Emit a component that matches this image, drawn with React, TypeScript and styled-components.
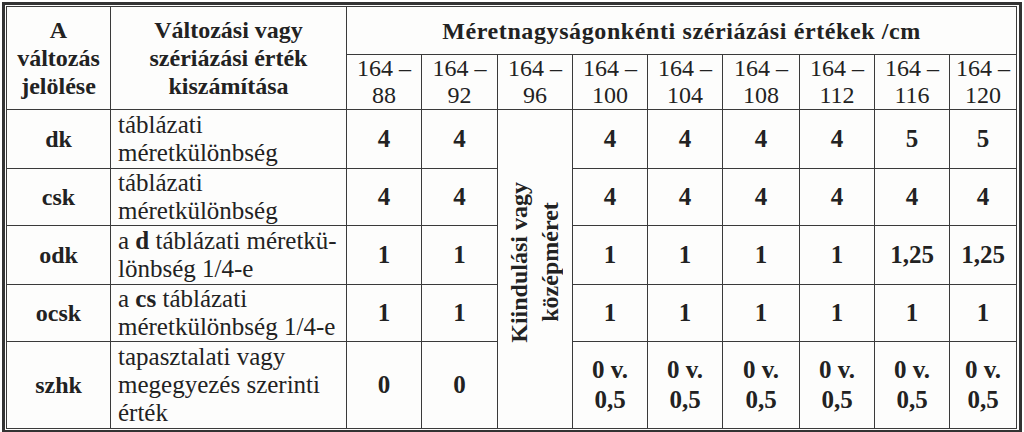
import styled, { createGlobalStyle } from "styled-components";

const Global = createGlobalStyle`
  html, body {
    margin: 0;
    background: #fff;
    font-family: "Liberation Serif", "Times New Roman", Times, serif;
  }
  table, td, b {
    font-family: "Liberation Serif", "Times New Roman", Times, serif;
  }
`;

const Frame = styled.div`
  margin: 2px 0 0 2px;
  width: 1012px;
  border: 3px solid #333;
  padding: 1px;
  background: #fdfdfc;
`;

const Table = styled.table`
  width: 1010px;
  table-layout: fixed;
  border-collapse: collapse;
  color: #222;
  font-size: 24px;
  line-height: 28px;
`;

const Cell = styled.td<{ $h?: number; $bold?: boolean; $left?: boolean }>`
  border: 1px solid #3a3a3a;
  padding: 0;
  height: ${(p) => (p.$h ? `${p.$h - 1}px` : "auto")};
  text-align: ${(p) => (p.$left ? "left" : "center")};
  padding-left: ${(p) => (p.$left ? "7px" : "0")};
  font-size: ${(p) => (p.$left ? "25px" : "inherit")};
  font-weight: ${(p) => (p.$bold ? 700 : 400)};
  vertical-align: middle;
  overflow: hidden;
  white-space: nowrap;
`;

const HeadCell = styled(Cell)`
  font-weight: 700;
`;

const TitleCell = styled(HeadCell)`
  letter-spacing: 0.6px;
`;

const RangeCell = styled(Cell)`
  line-height: 27px;
`;

const NumCell = styled(Cell)`
  font-size: 25px;
  line-height: 30px;
`;

const SpanCell = styled(Cell)`
  padding-bottom: 14px;
`;

const Rotated = styled.div`
  writing-mode: vertical-rl;
  transform: rotate(180deg);
  margin: 0 auto;
  font-weight: 700;
  line-height: 31px;
  text-align: center;
`;

const widths = [104, 236, 75, 76, 75, 75, 75, 77, 75, 75, 67];
const ranges = ["88", "92", "96", "100", "104", "108", "112", "116", "120"];

type Row = {
  code: string;
  desc: React.ReactNode;
  h: number;
  first: string[];
  rest: string[];
};

const rows: Row[] = [
  {
    code: "dk",
    desc: (
      <>
        táblázati
        <br />
        méretkülönbség
      </>
    ),
    h: 59,
    first: ["4", "4"],
    rest: ["4", "4", "4", "4", "5", "5"],
  },
  {
    code: "csk",
    desc: (
      <>
        táblázati
        <br />
        méretkülönbség
      </>
    ),
    h: 57,
    first: ["4", "4"],
    rest: ["4", "4", "4", "4", "4", "4"],
  },
  {
    code: "odk",
    desc: (
      <>
        a <b>d</b> táblázati méretkü-
        <br />
        lönbség 1/4-e
      </>
    ),
    h: 59,
    first: ["1", "1"],
    rest: ["1", "1", "1", "1", "1,25", "1,25"],
  },
  {
    code: "ocsk",
    desc: (
      <>
        a <b>cs</b> táblázati
        <br />
        méretkülönbség 1/4-e
      </>
    ),
    h: 57,
    first: ["1", "1"],
    rest: ["1", "1", "1", "1", "1", "1"],
  },
  {
    code: "szhk",
    desc: (
      <>
        tapasztalati vagy
        <br />
        megegyezés szerinti
        <br />
        érték
      </>
    ),
    h: 87,
    first: ["0", "0"],
    rest: ["0 v.\n0,5", "0 v.\n0,5", "0 v.\n0,5", "0 v.\n0,5", "0 v.\n0,5", "0 v.\n0,5"],
  },
];

const Value = ({ text }: { text: string }) => (
  <>
    {text.split("\n").map((t, i) => (
      <div key={i}>{t}</div>
    ))}
  </>
);

export default function App() {
  return (
    <>
      <Global />
      <Frame>
        <Table>
          <colgroup>
            {widths.map((w, i) => (
              <col key={i} style={{ width: w }} />
            ))}
          </colgroup>
          <tbody>
            <tr>
              <HeadCell rowSpan={2} $h={48}>
                A<br />
                változás
                <br />
                jelölése
              </HeadCell>
              <HeadCell rowSpan={2}>
                Változási vagy
                <br />
                szériázási érték
                <br />
                kiszámítása
              </HeadCell>
              <TitleCell colSpan={9} $h={48}>
                Méretnagyságonkénti szériázási értékek /cm
              </TitleCell>
            </tr>
            <tr>
              {ranges.map((r) => (
                <RangeCell key={r} $h={54}>
                  164 –<br />
                  {r}
                </RangeCell>
              ))}
            </tr>
            {rows.map((row, ri) => (
              <tr key={row.code}>
                <Cell $h={row.h} $bold>
                  {row.code}
                </Cell>
                <Cell $left>{row.desc}</Cell>
                {row.first.map((v, i) => (
                  <NumCell key={i} $bold>
                    <Value text={v} />
                  </NumCell>
                ))}
                {ri === 0 && (
                  <SpanCell rowSpan={5}>
                    <Rotated>
                      Kiindulási vagy
                      <br />
                      középméret
                    </Rotated>
                  </SpanCell>
                )}
                {row.rest.map((v, i) => (
                  <NumCell key={i} $bold>
                    <Value text={v} />
                  </NumCell>
                ))}
              </tr>
            ))}
          </tbody>
        </Table>
      </Frame>
    </>
  );
}
